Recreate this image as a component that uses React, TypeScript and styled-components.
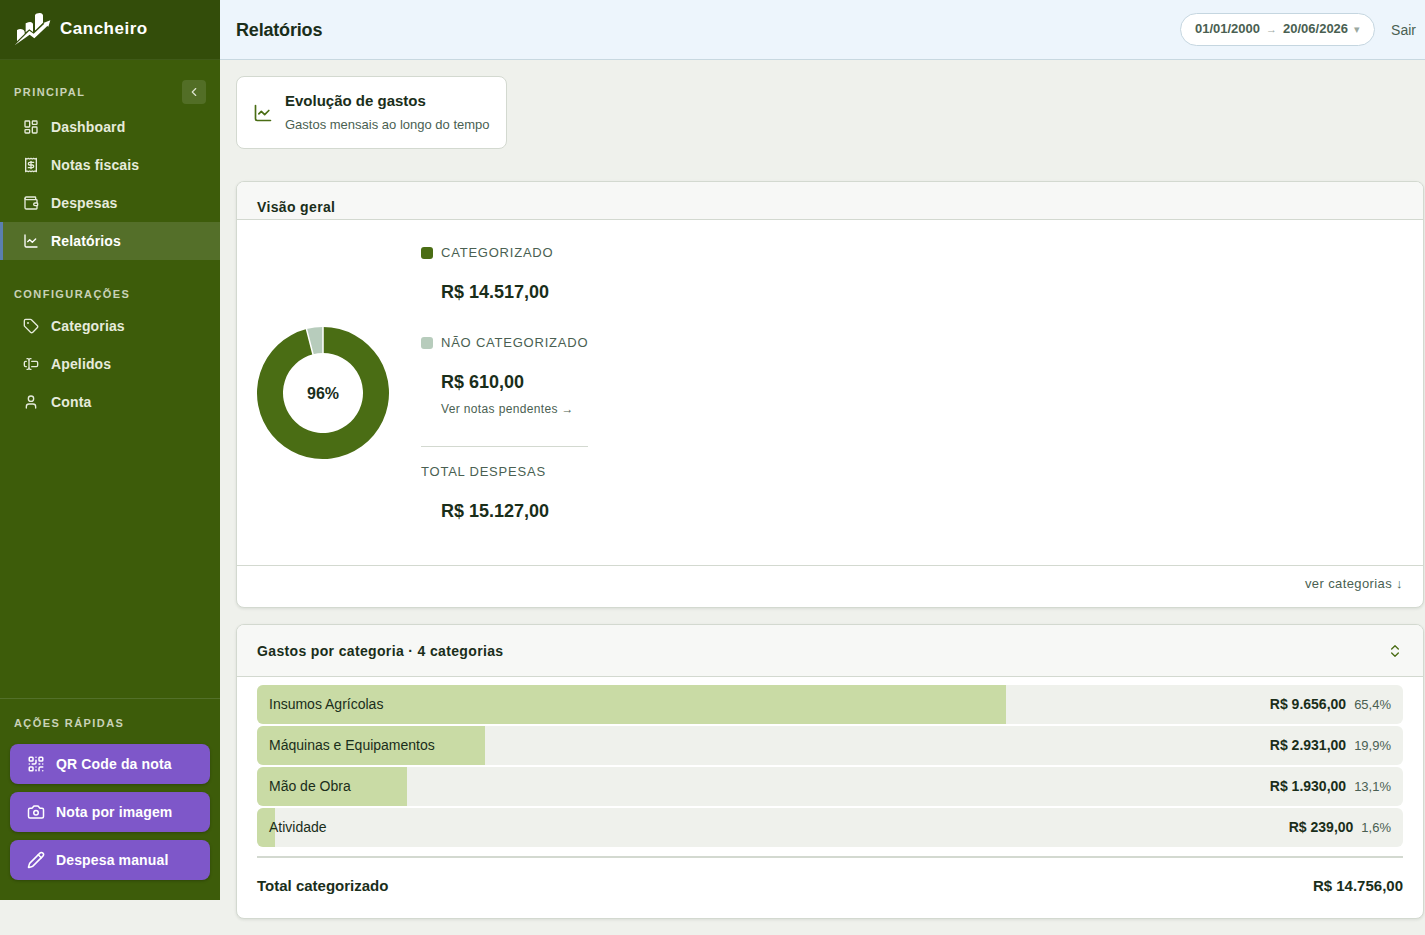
import React from "react";
import styled, { createGlobalStyle } from "styled-components";
import {
  Camera,
  ChartLine,
  ChevronLeft,
  ChevronsUpDown,
  LayoutDashboard,
  Pencil,
  QrCode,
  Receipt,
  Tag,
  TextCursorInput,
  User,
  Wallet,
  type LucideIcon,
} from "lucide-react";

const color = {
  ink: "#1a2e1a",
  muted: "#4a5f52",
  page: "#eff1ec",
  line: "#d3d9d0",
  green: "#4a6d14",
  mint: "#b7ccbc",
  bar: "#c9dba5",
  sidebar: "#3d5c0a",
  purple: "#7e57c9",
};

const GlobalStyle = createGlobalStyle`
  *, *::before, *::after { box-sizing: border-box; }
  body {
    margin: 0;
    background: ${color.page};
    color: ${color.ink};
    font-family: "Liberation Sans", Arial, sans-serif;
    font-size: 14px;
    line-height: 20px;
  }
  h1, h2, h3, p, ul, dl, dd { margin: 0; padding: 0; }
  ul { list-style: none; }
  button { font: inherit; cursor: pointer; }
  a { color: inherit; text-decoration: none; }
`;

const Shell = styled.div`
  display: grid;
  grid-template-columns: 220px minmax(0, 1fr);
  align-items: start;
  min-height: 100vh;
`;

const Sidebar = styled.aside`
  display: flex;
  flex-direction: column;
  min-height: calc(100vh - 35px);
  background: ${color.sidebar};
  color: #e6ebdc;
`;

const Brand = styled.div`
  display: flex;
  align-items: center;
  gap: 9px;
  height: 60px;
  padding: 0 14px 2px;
  background: #334d0a;
  border-bottom: 1px solid #3f5a18;
  color: #fff;
  font-size: 17px;
  font-weight: 700;
  letter-spacing: 0.03em;
`;

const Nav = styled.nav`
  flex: 1;
  padding-top: 20px;
`;

const NavHeading = styled.div<{ $compact?: boolean }>`
  display: flex;
  align-items: center;
  justify-content: space-between;
  height: ${(p) => (p.$compact ? 23 : 28)}px;
  padding: 0 14px 4px;
`;

const SectionLabel = styled.h2`
  font-size: 11px;
  line-height: 16px;
  font-weight: 700;
  letter-spacing: 0.13em;
  text-transform: uppercase;
  color: #c9d2b8;
`;

const Collapse = styled.button`
  display: grid;
  place-items: center;
  width: 24px;
  height: 24px;
  padding: 0;
  border: 0;
  border-radius: 4px;
  background: #526e26;
  color: #dde4d0;
`;

const NavGroup = styled.div`
  padding-top: 24px;
  &:first-child { padding-top: 0; }
`;

const NavLink = styled.a<{ $active?: boolean }>`
  display: flex;
  align-items: center;
  gap: 12px;
  height: 38px;
  padding: 0 20px;
  border-left: 3px solid ${(p) => (p.$active ? "#5b7fb0" : "transparent")};
  background: ${(p) => (p.$active ? "#546f29" : "transparent")};
  color: ${(p) => (p.$active ? "#fff" : "#e6ebdc")};
  font-weight: 700;
  letter-spacing: 0.01em;
`;

const Quick = styled.section`
  display: flex;
  flex-direction: column;
  gap: 8px;
  padding: 16px 10px 20px;
  border-top: 1px solid #53702a;
`;

const QuickHeading = styled.div`
  padding: 0 4px 5px;
`;

const QuickButton = styled.button`
  display: flex;
  align-items: center;
  gap: 11px;
  height: 40px;
  padding: 0 17px;
  border: 0;
  border-radius: 8px;
  background: ${color.purple};
  color: #fff;
  font-weight: 700;
  letter-spacing: 0.01em;
  box-shadow: 0 1px 3px rgba(0, 0, 0, 0.25);
`;

const TopBar = styled.header`
  display: flex;
  align-items: center;
  gap: 16px;
  height: 60px;
  padding: 0 9px 0 16px;
  background: #edf5fc;
  border-bottom: 1px solid #c8d8e0;
`;

const PageTitle = styled.h1`
  flex: 1;
  font-size: 18px;
  line-height: 24px;
  letter-spacing: -0.01em;
`;

const DateRange = styled.button`
  display: flex;
  align-items: center;
  gap: 6px;
  height: 33px;
  padding: 0 14px 2px;
  border: 1px solid #c5d6e0;
  border-radius: 17px;
  background: #fff;
  color: ${color.muted};
  font-size: 13px;
  font-weight: 700;
`;

const Faint = styled.span`
  color: #9aa89f;
  font-size: 11px;
  font-weight: 400;
`;

const SignOut = styled.a`
  color: ${color.muted};
`;

const Content = styled.main`
  display: flex;
  flex-direction: column;
  align-items: flex-start;
  padding: 16px 1px 16px 16px;
`;

const ReportLink = styled.a`
  display: flex;
  align-items: center;
  gap: 12px;
  padding: 12px 16px;
  margin-bottom: 32px;
  border: 1px solid ${color.line};
  border-radius: 8px;
  background: #fff;
`;

const ReportTitle = styled.h2`
  font-size: 15px;
  line-height: 24px;
`;

const ReportText = styled.p`
  color: ${color.muted};
  font-size: 13px;
  line-height: 23px;
`;

const Panel = styled.section`
  align-self: stretch;
  margin-bottom: 16px;
  overflow: hidden;
  border: 1px solid ${color.line};
  border-radius: 8px;
  background: #fff;
  box-shadow: 0 1px 3px rgba(26, 46, 26, 0.1);
  &:last-child { margin-bottom: 0; }
`;

const PanelHead = styled.header<{ $tall?: boolean }>`
  display: flex;
  align-items: ${(p) => (p.$tall ? "center" : "flex-end")};
  justify-content: space-between;
  height: ${(p) => (p.$tall ? 52 : 38)}px;
  padding: 0 20px;
  border-bottom: 1px solid ${color.line};
  background: #f7f8f6;
`;

const PanelTitle = styled.h2`
  font-size: 14px;
  line-height: 24px;
  letter-spacing: 0.025em;
`;

const IconButton = styled.button`
  display: grid;
  place-items: center;
  padding: 0;
  border: 0;
  background: none;
  color: ${color.green};
`;

const Overview = styled.div`
  display: flex;
  align-items: center;
  gap: 32px;
  padding: 20px;
`;

const DonutText = styled.text`
  fill: ${color.ink};
  font-size: 16px;
  font-weight: 700;
  text-anchor: middle;
`;

const Legend = styled.dl`
  display: flex;
  flex-direction: column;
  gap: 24px;
  && { padding-bottom: 20px; }
`;

const LegendItem = styled.div<{ $total?: boolean }>`
  padding-top: ${(p) => (p.$total ? 12 : 0)}px;
  border-top: ${(p) => (p.$total ? `1px solid ${color.line}` : "0")};
`;

const LegendLabel = styled.dt`
  display: flex;
  align-items: center;
  gap: 8px;
  color: ${color.muted};
  font-size: 13px;
  line-height: 26px;
  letter-spacing: 0.06em;
  text-transform: uppercase;
`;

const Swatch = styled.span<{ $fill: string }>`
  width: 12px;
  height: 12px;
  border-radius: 3px;
  background: ${(p) => p.$fill};
`;

const LegendValue = styled.dd`
  && { padding: 12px 0 0 20px; }
  font-size: 18px;
  font-weight: 700;
  line-height: 28px;
`;

const PendingLink = styled.a`
  display: block;
  color: ${color.muted};
  font-size: 12px;
  font-weight: 400;
  line-height: 26px;
  letter-spacing: 0.03em;
`;

const PanelFoot = styled.footer`
  display: flex;
  justify-content: flex-end;
  padding: 6px 20px 11px;
  border-top: 1px solid ${color.line};
`;

const FootLink = styled.a`
  color: ${color.muted};
  font-size: 13px;
  line-height: 24px;
  letter-spacing: 0.03em;
`;

const Bars = styled.ul`
  display: flex;
  flex-direction: column;
  gap: 2px;
  && { padding: 8px 20px 9px; }
`;

const BarRow = styled.li`
  display: grid;
  align-items: center;
  height: 39px;
  overflow: hidden;
  border-radius: 6px;
  background: ${color.page};
  > * { grid-area: 1 / 1; }
`;

const BarFill = styled.div`
  align-self: stretch;
  background: ${color.bar};
`;

const BarText = styled.div`
  display: flex;
  align-items: baseline;
  gap: 8px;
  padding: 0 12px;
`;

const BarName = styled.span`
  flex: 1;
`;

const Percent = styled.span`
  color: ${color.muted};
  font-size: 13px;
`;

const TotalRow = styled.div`
  display: flex;
  justify-content: space-between;
  margin: 0 20px;
  padding: 16px 0 20px;
  border-top: 2px solid ${color.line};
  font-size: 15px;
  font-weight: 700;
  line-height: 24px;
`;

function Logo() {
  return (
    <svg width="37" height="34" viewBox="42 36 111 102" fill="#fff" aria-hidden="true">
      <path d="M51 124V90q9-5 15-2 6 1 8 7v6Z" />
      <path d="M77 97V70l8-3q8-3 12 2 3 1 2 6v21l-11-8Z" />
      <path d="M105 91V45q2-5 9-5 9-2 13 2 3 3 2 9v17l-22 22Z" />
      <path d="M44 136 88 92 101 101 133 71 130 69 151 61 145 80 142 78 103 115 89 104Z" />
    </svg>
  );
}

/** Ring chart: the first share runs clockwise from the top, the second closes the circle. */
function Donut({ share, label }: { share: number; label: string }) {
  const at = (r: number, turn: number) => {
    const a = turn * 2 * Math.PI;
    return `${66 + r * Math.sin(a)} ${66 - r * Math.cos(a)}`;
  };
  const slice = (from: number, to: number) => {
    const large = to - from > 0.5 ? 1 : 0;
    return `M${at(66, from)}A66 66 0 ${large} 1 ${at(66, to)}L${at(40, to)}A40 40 0 ${large} 0 ${at(40, from)}Z`;
  };
  return (
    <svg width="132" height="132" viewBox="0 0 132 132" role="img" aria-label={`${label} categorizado`}>
      <path d={slice(0, share)} fill={color.green} />
      <path d={slice(share, 0.9999)} fill={color.mint} />
      <path d={`M${at(39, 0)}L${at(67, 0)}M${at(39, share)}L${at(67, share)}`} stroke="#fff" strokeWidth="1.5" />
      <DonutText x="66" y="72">{label}</DonutText>
    </svg>
  );
}

type Item = { icon: LucideIcon; label: string; active?: boolean };

const mainItems: Item[] = [
  { icon: LayoutDashboard, label: "Dashboard" },
  { icon: Receipt, label: "Notas fiscais" },
  { icon: Wallet, label: "Despesas" },
  { icon: ChartLine, label: "Relatórios", active: true },
];

const settingsItems: Item[] = [
  { icon: Tag, label: "Categorias" },
  { icon: TextCursorInput, label: "Apelidos" },
  { icon: User, label: "Conta" },
];

const quickItems: Item[] = [
  { icon: QrCode, label: "QR Code da nota" },
  { icon: Camera, label: "Nota por imagem" },
  { icon: Pencil, label: "Despesa manual" },
];

const categories = [
  { name: "Insumos Agrícolas", value: "R$ 9.656,00", percent: 65.4 },
  { name: "Máquinas e Equipamentos", value: "R$ 2.931,00", percent: 19.9 },
  { name: "Mão de Obra", value: "R$ 1.930,00", percent: 13.1 },
  { name: "Atividade", value: "R$ 239,00", percent: 1.6 },
];

function NavList({ items }: { items: Item[] }) {
  return (
    <ul>
      {items.map(({ icon: Icon, label, active }) => (
        <li key={label}>
          <NavLink href="#" $active={active} aria-current={active ? "page" : undefined}>
            <Icon size={16} />
            {label}
          </NavLink>
        </li>
      ))}
    </ul>
  );
}

export default function App() {
  return (
    <>
      <GlobalStyle />
      <Shell>
        <Sidebar>
          <Brand>
            <Logo />
            Cancheiro
          </Brand>
          <Nav>
            <NavGroup>
              <NavHeading>
                <SectionLabel>Principal</SectionLabel>
                <Collapse type="button" aria-label="Recolher menu">
                  <ChevronLeft size={14} />
                </Collapse>
              </NavHeading>
              <NavList items={mainItems} />
            </NavGroup>
            <NavGroup>
              <NavHeading $compact>
                <SectionLabel>Configurações</SectionLabel>
              </NavHeading>
              <NavList items={settingsItems} />
            </NavGroup>
          </Nav>
          <Quick>
            <QuickHeading>
              <SectionLabel>Ações rápidas</SectionLabel>
            </QuickHeading>
            {quickItems.map(({ icon: Icon, label }) => (
              <QuickButton key={label} type="button">
                <Icon size={18} />
                {label}
              </QuickButton>
            ))}
          </Quick>
        </Sidebar>

        <div>
          <TopBar>
            <PageTitle>Relatórios</PageTitle>
            <DateRange type="button">
              <span>01/01/2000</span>
              <Faint>→</Faint>
              <span>20/06/2026</span>
              <Faint>▾</Faint>
            </DateRange>
            <SignOut href="#">Sair</SignOut>
          </TopBar>

          <Content>
            <ReportLink href="#">
              <ChartLine size={20} color={color.green} />
              <div>
                <ReportTitle>Evolução de gastos</ReportTitle>
                <ReportText>Gastos mensais ao longo do tempo</ReportText>
              </div>
            </ReportLink>

            <Panel>
              <PanelHead>
                <PanelTitle>Visão geral</PanelTitle>
              </PanelHead>
              <Overview>
                <Donut share={0.9597} label="96%" />
                <Legend>
                  <LegendItem>
                    <LegendLabel>
                      <Swatch $fill={color.green} />
                      Categorizado
                    </LegendLabel>
                    <LegendValue>R$ 14.517,00</LegendValue>
                  </LegendItem>
                  <LegendItem>
                    <LegendLabel>
                      <Swatch $fill={color.mint} />
                      Não categorizado
                    </LegendLabel>
                    <LegendValue>
                      R$ 610,00
                      <PendingLink href="#">Ver notas pendentes →</PendingLink>
                    </LegendValue>
                  </LegendItem>
                  <LegendItem $total>
                    <LegendLabel>Total despesas</LegendLabel>
                    <LegendValue>R$ 15.127,00</LegendValue>
                  </LegendItem>
                </Legend>
              </Overview>
              <PanelFoot>
                <FootLink href="#categorias">ver categorias ↓</FootLink>
              </PanelFoot>
            </Panel>

            <Panel id="categorias">
              <PanelHead $tall>
                <PanelTitle>Gastos por categoria · 4 categorias</PanelTitle>
                <IconButton type="button" aria-label="Recolher categorias">
                  <ChevronsUpDown size={16} />
                </IconButton>
              </PanelHead>
              <Bars>
                {categories.map((c) => (
                  <BarRow key={c.name}>
                    <BarFill style={{ width: `${c.percent}%` }} />
                    <BarText>
                      <BarName>{c.name}</BarName>
                      <strong>{c.value}</strong>
                      <Percent>{c.percent.toLocaleString("pt-BR")}%</Percent>
                    </BarText>
                  </BarRow>
                ))}
              </Bars>
              <TotalRow>
                <span>Total categorizado</span>
                <span>R$ 14.756,00</span>
              </TotalRow>
            </Panel>
          </Content>
        </div>
      </Shell>
    </>
  );
}
